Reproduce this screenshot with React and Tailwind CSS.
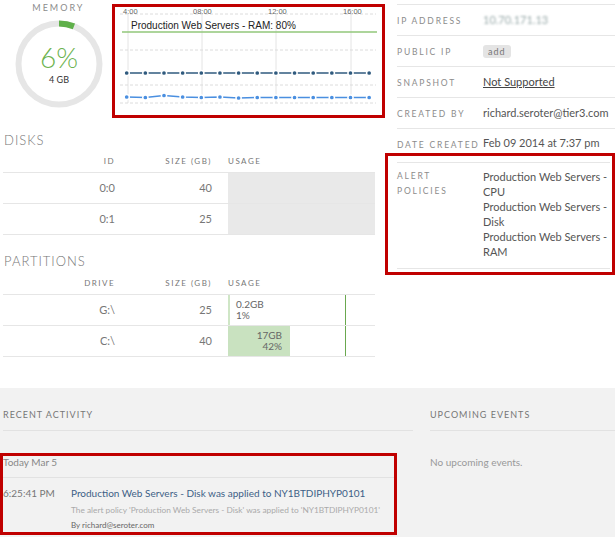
const font = { fontFamily: "Lato, 'Open Sans', sans-serif" }

const Label = ({ children }) => (
    <span className="text-[8.5px] tracking-[1.8px] uppercase text-[#8c8c8c]">{children}</span>
)

const InfoRow = ({ label, children, last }) => (
    <div className={`flex items-center h-[31px] ${last ? "" : "border-b border-[#e6e6e6]"}`}>
        <div className="w-[86px] pb-[5px]"><Label>{label}</Label></div>
        <div className="text-[11px] text-[#555]">{children}</div>
    </div>
)

const MemoryGauge = () => {
    const r = 40.5
    const c = 2 * Math.PI * r
    return (
        <div className="w-[112px]">
            <div className="text-center text-[9px] tracking-[2px] text-[#8c8c8c] leading-[16px] pl-[5px]">MEMORY</div>
            <div className="relative ml-[15px] mt-[4px] w-[88px] h-[88px]">
                <svg width="88" height="88" viewBox="0 0 88 88">
                    <circle cx="44" cy="44" r={r} fill="none" stroke="#e6e6e6" strokeWidth="6" />
                    <circle cx="44" cy="44" r={r} fill="none" stroke="#5fb04a" strokeWidth="6"
                        strokeDasharray={`${c * 0.06} ${c}`} transform="rotate(-90 44 44)" />
                </svg>
                <div className="absolute inset-0 flex flex-col items-center pt-[23px]">
                    <div className="text-[28px] leading-[28px] font-light text-[#6cb34f]">6%</div>
                    <div className="text-[9px] leading-[12px] mt-[3px] text-[#333]">4 GB</div>
                </div>
            </div>
        </div>
    )
}

const xs = Array.from({ length: 14 }, (_, i) => 126.7 + i * 18.65)
const light = [97, 97.5, 95.5, 97, 97.5, 97, 98, 97.5, 97.5, 97.5, 97.5, 97.5, 97.5, 97.5]

const Chart = () => (
    <div className="mt-[4px] w-[274px] h-[114px] border-[3px] border-[#c00000] overflow-hidden">
        <svg width="268" height="108" viewBox="115 7 268 108">
            {[128, 202, 276, 351].map(x => (
                <line key={x} x1={x} y1="14" x2={x} y2="103" stroke="#e4e4e4" strokeWidth="1" />
            ))}
            {[14, 50, 85, 103].map(y => (
                <line key={y} x1="120" y1={y} x2="376" y2={y} stroke="#dcdcdc" strokeWidth="1" strokeDasharray="3 2" />
            ))}
            {[["4:00", 123], ["08:00", 193], ["12:00", 268], ["16:00", 343]].map(([t, x]) => (
                <text key={t} x={x} y="13.5" fontSize="7.5" fill="#666" fontFamily="'Liberation Sans', Arial, sans-serif">{t}</text>
            ))}
            <line x1="122" y1="32" x2="377" y2="32" stroke="#92c77a" strokeWidth="1.5" />
            <text x="131" y="29" fontSize="10" fill="#222" fontFamily="'Liberation Sans', Arial, sans-serif">Production Web Servers - RAM: 80%</text>
            <polyline points={xs.map(x => `${x},73`).join(" ")} fill="none" stroke="#2f5a7e" strokeWidth="1.5" />
            {xs.map(x => <circle key={x} cx={x} cy="73" r="2.6" fill="#2f5a7e" stroke="#fff" strokeWidth="1.5" />)}
            <polyline points={xs.map((x, i) => `${x},${light[i]}`).join(" ")} fill="none" stroke="#4a8fe0" strokeWidth="1.5" />
            {xs.map((x, i) => <circle key={x} cx={x} cy={light[i]} r="2.6" fill="#4a8fe0" stroke="#fff" strokeWidth="1.5" />)}
        </svg>
    </div>
)

const Title = ({ children, className }) => (
    <h3 className={`text-[13px] leading-[16px] tracking-[1px] text-[#777] font-light ${className}`}>{children}</h3>
)

const HeadCell = ({ children, className }) => (
    <div className={`text-[8px] tracking-[1.5px] text-[#777] ${className}`}>{children}</div>
)

const App = () => {
    return (
        <div className="w-[615px] h-[537px] overflow-hidden bg-white" style={font}>
            <section className="flex h-[388px]">
                <div className="w-[385px]">
                    <div className="flex h-[118px]">
                        <MemoryGauge />
                        <Chart />
                    </div>

                    <Title className="mt-[14px] ml-[4px]">DISKS</Title>
                    <div className="ml-[3px] w-[372px] mt-[7px]">
                        <div className="flex border-b border-[#e6e6e6] pb-[5px] leading-[12px]">
                            <HeadCell className="w-[112px] text-right">ID</HeadCell>
                            <HeadCell className="w-[97px] text-right">SIZE (GB)</HeadCell>
                            <HeadCell className="ml-[16px]">USAGE</HeadCell>
                        </div>
                        {[["0:0", 40], ["0:1", 25]].map(([id, size]) => (
                            <div key={id} className="flex h-[31px] border-b border-[#e6e6e6] text-[11px] text-[#777]">
                                <div className="w-[112px] text-right self-center">{id}</div>
                                <div className="w-[97px] text-right self-center">{size}</div>
                                <div className="ml-[16px] flex-1 bg-[#e9e9e9]"></div>
                            </div>
                        ))}
                    </div>

                    <Title className="mt-[18px] ml-[4px]">PARTITIONS</Title>
                    <div className="ml-[3px] w-[372px] mt-[8px]">
                        <div className="flex border-b border-[#e6e6e6] pb-[5px] leading-[12px]">
                            <HeadCell className="w-[112px] text-right">DRIVE</HeadCell>
                            <HeadCell className="w-[97px] text-right">SIZE (GB)</HeadCell>
                            <HeadCell className="ml-[16px]">USAGE</HeadCell>
                        </div>
                        <div className="flex h-[31px] border-b border-[#e6e6e6] text-[11px] text-[#777]">
                            <div className="w-[112px] text-right self-center">G:\</div>
                            <div className="w-[97px] text-right self-center">25</div>
                            <div className="ml-[16px] flex-1 relative">
                                <div className="h-full border-l-2 border-[#cfe6c6] pl-[6px] pt-[4px] text-[10px] leading-[11px] text-[#666]">
                                    <div>0.2GB</div>
                                    <div>1%</div>
                                </div>
                                <div className="absolute left-[117px] top-0 h-full w-px bg-[#6aa84f]"></div>
                            </div>
                        </div>
                        <div className="flex h-[31px] border-b border-[#e6e6e6] text-[11px] text-[#777]">
                            <div className="w-[112px] text-right self-center">C:\</div>
                            <div className="w-[97px] text-right self-center">40</div>
                            <div className="ml-[16px] flex-1 relative">
                                <div className="h-full w-[62px] bg-[#c9e2c0] pr-[8px] pt-[4px] text-right text-[10px] leading-[11px] text-[#666]">
                                    <div>17GB</div>
                                    <div>42%</div>
                                </div>
                                <div className="absolute left-[117px] top-0 h-full w-px bg-[#6aa84f]"></div>
                            </div>
                        </div>
                    </div>
                </div>

                <div className="flex-1">
                    <div className="ml-[12px] mt-[4px] border-t border-[#e6e6e6]">
                        <InfoRow label="IP Address">
                            <span className="text-[#9aa] blur-[1.2px]">10.70.171.13</span>
                        </InfoRow>
                        <InfoRow label="Public IP">
                            <span className="inline-block bg-[#e4e4e4] rounded-[3px] px-[5px] text-[9px] leading-[13px] tracking-[1px] text-[#777]">add</span>
                        </InfoRow>
                        <InfoRow label="Snapshot">
                            <span className="underline text-[#444]">Not Supported</span>
                        </InfoRow>
                        <InfoRow label="Created By">richard.seroter@tier3.com</InfoRow>
                    </div>
                    <div className="ml-[12px] flex items-center h-[24px] pt-[5px]">
                        <div className="w-[86px] pb-[3px]"><Label>Date Created</Label></div>
                        <div className="text-[11px] text-[#555] whitespace-nowrap">Feb 09 2014 at 7:37 pm</div>
                    </div>
                    <div className="border-[3px] border-[#c00000] pl-[9px] pr-[2px] pt-[6px] pb-[3px]">
                        <div className="border-t border-b border-[#e6e6e6] flex pt-[6px] pb-[9px]">
                            <div className="w-[86px] text-[8.5px] tracking-[1.8px] text-[#8c8c8c] leading-[15px]">
                                ALERT<br />POLICIES
                            </div>
                            <div className="text-[11px] leading-[15px] text-[#555]">
                                <div>Production Web Servers -<br />CPU</div>
                                <div>Production Web Servers -<br />Disk</div>
                                <div>Production Web Servers -<br />RAM</div>
                            </div>
                        </div>
                    </div>
                </div>
            </section>

            <section className="flex h-[149px] bg-[#f2f2f2]">
                <div className="w-[413px] pt-[21px]">
                    <div className="ml-[3px] border-b border-[#e2e2e2] pb-[9px] text-[9px] leading-[12px] tracking-[1px] text-[#777]">RECENT ACTIVITY</div>
                    <div className="mt-[22px] w-[397px] h-[82px] border-[3px] border-[#c00000]">
                        <div className="border-b border-[#e2e2e2] pb-[9px] text-[10px] leading-[12px] text-[#888]">Today Mar 5</div>
                        <div className="flex mt-[8px]">
                            <div className="w-[68px] text-[10px] leading-[14px] text-[#777]">6:25:41 PM</div>
                            <div>
                                <div className="text-[10px] leading-[14px] text-[#3d5f86] whitespace-nowrap">Production Web Servers - Disk was applied to NY1BTDIPHYP0101</div>
                                <div className="mt-[4px] text-[8.3px] leading-[12px] text-[#aaa] whitespace-nowrap">The alert policy 'Production Web Servers - Disk' was applied to 'NY1BTDIPHYP0101'</div>
                                <div className="mt-[3px] text-[8px] leading-[12px] text-[#666]">By richard@seroter.com</div>
                            </div>
                        </div>
                    </div>
                </div>
                <div className="flex-1 ml-[17px] pt-[21px]">
                    <div className="border-b border-[#e2e2e2] pb-[9px] text-[9px] leading-[12px] tracking-[1px] text-[#777]">UPCOMING EVENTS</div>
                    <div className="mt-[24px] text-[10px] leading-[14px] text-[#999]">No upcoming events.</div>
                </div>
            </section>
        </div>
    )
}

export default App
